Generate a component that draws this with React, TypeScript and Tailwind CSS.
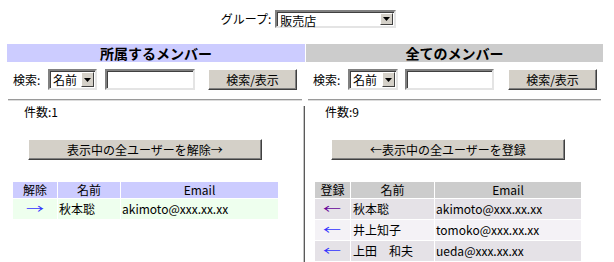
import React from 'react'

const FONT = '[font-family:"Noto_Sans_CJK_JP","DejaVu_Sans",sans-serif]'

function Select({ value, width, height = 21 }: { value: string; width: number; height?: number }) {
  return (
    <div
      className="flex items-stretch bg-white border-2 border-t-[#808080] border-l-[#808080] border-b-[#e4e4e4] border-r-[#e4e4e4] shadow-[inset_1px_1px_0_#404040]"
      style={{ width, height }}
    >
      <span className="flex-1 pl-[3px] pt-px text-[12px] leading-[15px] text-black">{value}</span>
      <span className="w-[13px] m-px flex items-center justify-center bg-[#d4d0c8] border border-t-white border-l-white border-b-[#404040] border-r-[#404040]">
        <svg width="7" height="4" viewBox="0 0 7 4">
          <path d="M0 0h7L3.5 4z" fill="#000" />
        </svg>
      </span>
    </div>
  )
}

function TextInput({ width }: { width: number }) {
  return (
    <div
      className="h-[21px] bg-white border-2 border-t-[#808080] border-l-[#808080] border-b-[#e4e4e4] border-r-[#e4e4e4] shadow-[inset_1px_1px_0_#404040]"
      style={{ width }}
    />
  )
}

function Button({ label, width }: { label: string; width: number }) {
  return (
    <div
      className="h-[21px] flex items-center justify-center bg-[#d4d0c8] border border-t-white border-l-white border-b-[#404040] border-r-[#404040] shadow-[inset_-1px_-1px_0_#808080] text-[12px] leading-none text-black"
      style={{ width }}
    >
      {label}
    </div>
  )
}

function SearchRow({ pad, sel, inp, gapA, gapB }: { pad: number; sel: number; inp: number; gapA: number; gapB: number }) {
  return (
    <div className="flex items-center mt-[7px] h-[21px]" style={{ paddingLeft: pad }}>
      <span className="w-[35px] text-[12px] text-black">検索:</span>
      <Select value="名前" width={sel} />
      <div style={{ marginLeft: gapA }}>
        <TextInput width={inp} />
      </div>
      <div style={{ marginLeft: gapB }}>
        <Button label="検索/表示" width={89} />
      </div>
    </div>
  )
}

type Row = { name: string; email: string; bg: string; arrowColor: string }

const ALL: Row[] = [
  { name: '秋本聡', email: 'akimoto@xxx.xx.xx', bg: 'bg-[#e5e2e7]', arrowColor: 'text-[#660099]' },
  { name: '井上知子', email: 'tomoko@xxx.xx.xx', bg: 'bg-[#f4f2f6]', arrowColor: 'text-[#3333ff]' },
  { name: '上田　和夫', email: 'ueda@xxx.xx.xx', bg: 'bg-[#e5e2e7]', arrowColor: 'text-[#3333ff]' },
]

export default function App() {
  return (
    <div className={`w-[614px] h-[262px] overflow-hidden bg-white text-black ${FONT}`}>
      {/* group picker */}
      <div className="flex justify-center items-center pt-[10px] pl-[3px] gap-[4px]">
        <span className="text-[12px] leading-none">グループ:</span>
        <Select value="販売店" width={121} height={18} />
      </div>

      {/* headers + search */}
      <div className="flex mt-[16px] pl-[7px] gap-px">
        <div className="w-[298px]">
          <div className="h-[18px] bg-[#ccccff] flex items-center justify-center text-[14px] font-bold leading-none">
            所属するメンバー
          </div>
          <SearchRow pad={6} sel={49} inp={90} gapA={8} gapB={13} />
          <div className="mt-[9px] ml-px w-[294px] h-[2px] border-t border-t-[#9a9a9a] border-b border-b-[#dcdcdc]" />
        </div>
        <div className="w-[297px]">
          <div className="h-[18px] bg-[#cccccc] flex items-center justify-center text-[14px] font-bold leading-none">
            全てのメンバー
          </div>
          <SearchRow pad={7} sel={50} inp={89} gapA={7} gapB={14} />
          <div className="mt-[9px] ml-[2px] w-[293px] h-[2px] border-t border-t-[#9a9a9a] border-b border-b-[#dcdcdc]" />
        </div>
      </div>

      {/* lists */}
      <div className="flex pl-[7px]">
        <div className="w-[296px]">
          <div className="pt-[4px] pl-[17px] text-[12px] leading-[14px]">件数:1</div>
          <div className="mt-[20px] ml-[21px]">
            <Button label="表示中の全ユーザーを解除→" width={234} />
          </div>
          <div className="mt-[22px] ml-[6px] grid grid-cols-[44px_62px_157px] gap-px text-[12px] leading-none">
            <div className="h-[16px] bg-[#ccccff] flex items-center justify-center">解除</div>
            <div className="h-[16px] bg-[#ccccff] flex items-center justify-center">名前</div>
            <div className="h-[16px] bg-[#ccccff] flex items-center justify-center">Email</div>
            <div className="h-[20px] bg-[#eeffee] flex items-center justify-center text-[#3333ff]">
              <span className="inline-block scale-x-150">→</span>
            </div>
            <div className="h-[20px] bg-[#eeffee] flex items-center pl-px">秋本聡</div>
            <div className="h-[20px] bg-[#eeffee] flex items-center pl-px">akimoto@xxx.xx.xx</div>
          </div>
        </div>

        <div className="mt-[5px] w-[2px] h-[160px] border-l border-l-[#c4c4c4] border-r border-r-[#5a5a5a]" />

        <div className="flex-1">
          <div className="pt-[4px] pl-[20px] text-[12px] leading-[14px]">件数:9</div>
          <div className="mt-[20px] ml-[26px]">
            <Button label="←表示中の全ユーザーを登録" width={234} />
          </div>
          <div className="mt-[22px] ml-[10px] grid grid-cols-[35px_83px_146px] gap-px text-[12px] leading-none">
            <div className="h-[16px] bg-[#cccccc] flex items-center justify-center">登録</div>
            <div className="h-[16px] bg-[#cccccc] flex items-center justify-center">名前</div>
            <div className="h-[16px] bg-[#cccccc] flex items-center justify-center">Email</div>
            {ALL.map((r) => (
              <React.Fragment key={r.email}>
                <div className={`h-[20px] ${r.bg} flex items-center justify-center ${r.arrowColor}`}>
                  <span className="inline-block scale-x-150">←</span>
                </div>
                <div className={`h-[20px] ${r.bg} flex items-center pl-[2px] whitespace-pre`}>{r.name}</div>
                <div className={`h-[20px] ${r.bg} flex items-center pl-px`}>{r.email}</div>
              </React.Fragment>
            ))}
          </div>
        </div>
      </div>
    </div>
  )
}
